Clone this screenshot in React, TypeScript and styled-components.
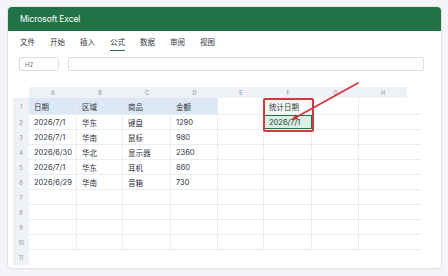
import React from "react";
import styled, { createGlobalStyle, css } from "styled-components";

const GlobalStyle = createGlobalStyle`
  html, body {
    margin: 0;
    padding: 0;
    background: #f3f5f8;
    font-family: Inter, "Noto Sans CJK SC", "Noto Sans", sans-serif;
  }
`;

const Page = styled.div`
  width: 448px;
  height: 276px;
  padding: 7px 7px 0 8px;
  box-sizing: border-box;
`;

const Card = styled.div`
  width: 433px;
  height: 261px;
  background: #ffffff;
  border-radius: 4px;
  box-shadow: 0 0 0 1px #e1e5ea, 0 1px 3px rgba(20, 30, 50, 0.06);
  overflow: hidden;
  display: flex;
  flex-direction: column;
`;

const TitleBar = styled.div`
  height: 24px;
  background: #217346;
  color: #ffffff;
  font-size: 8.5px;
  display: flex;
  align-items: center;
  padding-left: 12px;
  letter-spacing: -0.1px;
`;

const Menu = styled.div`
  display: flex;
  gap: 15px;
  padding: 7px 12px 0;
`;

const MenuItem = styled.div<{ $active?: boolean }>`
  font-size: 7.5px;
  line-height: 10px;
  color: #333a44;
  padding-bottom: 2px;
  border-bottom: 1.5px solid transparent;
  ${(p) =>
    p.$active &&
    css`
      border-bottom-color: #217346;
    `}
`;

const FormulaBar = styled.div`
  display: flex;
  gap: 9px;
  padding: 6px 17px 0 11px;
`;

const NameBox = styled.div`
  width: 40px;
  height: 14px;
  box-sizing: border-box;
  border: 1px solid #d9dee4;
  border-radius: 2px;
  font-size: 6px;
  color: #6b7380;
  padding-left: 5px;
  display: flex;
  align-items: center;
`;

const FormulaInput = styled.div`
  flex: 1;
  height: 14px;
  box-sizing: border-box;
  border: 1px solid #d9dee4;
  border-radius: 2px;
`;

const Grid = styled.div`
  position: relative;
  margin: 16px 0 0 5px;
  width: 408px;
`;

const HeaderRow = styled.div`
  display: flex;
  height: 11px;
`;

const Corner = styled.div`
  width: 16px;
`;

const ColHead = styled.div<{ $w: number }>`
  width: ${(p) => p.$w}px;
  background: #eef1f5;
  font-size: 5.5px;
  color: #8a93a0;
  display: flex;
  align-items: center;
  justify-content: center;
`;

const Row = styled.div<{ $h: number }>`
  display: flex;
  height: ${(p) => p.$h}px;
`;

const RowNum = styled.div`
  width: 16px;
  flex-shrink: 0;
  background: #eef2f7;
  font-size: 5.5px;
  color: #8a93a0;
  display: flex;
  align-items: center;
  justify-content: center;
`;

const Cells = styled.div<{ $lined: boolean }>`
  display: flex;
  width: 392px;
  box-sizing: border-box;
  border-bottom: 1px solid ${(p) => (p.$lined ? "#e9ecf0" : "transparent")};
`;

const Cell = styled.div<{ $w: number; $head?: boolean; $last?: boolean; $lined: boolean }>`
  width: ${(p) => p.$w}px;
  box-sizing: border-box;
  border-right: 1px solid ${(p) => (p.$lined && !p.$last ? "#e9ecf0" : "transparent")};
  padding-left: 5px;
  font-size: 7.5px;
  color: #2f3540;
  display: flex;
  align-items: center;
  white-space: nowrap;
  ${(p) =>
    p.$head &&
    css`
      background: #dde8f6;
    `}
`;

const SumHead = styled(Cell)`
  background: #f4faf6;
`;

const Picked = styled(Cell)`
  background: #d8f1e2;
  border: 1px solid #217346;
  padding-left: 4px;
`;

const RedFrame = styled.div`
  position: absolute;
  left: 250px;
  top: 11px;
  width: 51px;
  height: 34px;
  box-sizing: border-box;
  border: 2px solid #d2393c;
  border-radius: 2px;
  pointer-events: none;
`;

const Arrow = styled.svg`
  position: absolute;
  left: 0;
  top: -10px;
  overflow: visible;
`;

const widths = [48, 46, 48, 47, 46, 48, 47, 48];
const letters = ["A", "B", "C", "D", "E", "F", "G", "H"];

const data: string[][] = [
  ["日期", "区域", "商品", "金额", "", "统计日期", "", ""],
  ["2026/7/1", "华东", "键盘", "1290", "", "2026/7/1", "", ""],
  ["2026/7/1", "华南", "鼠标", "980", "", "", "", ""],
  ["2026/6/30", "华北", "显示器", "2360", "", "", "", ""],
  ["2026/7/1", "华东", "耳机", "860", "", "", "", ""],
  ["2026/6/29", "华南", "音箱", "730", "", "", "", ""],
];

const menus = ["文件", "开始", "插入", "公式", "数据", "审阅", "视图"];

export default function App() {
  const rows = Array.from({ length: 11 }, (_, i) => i);
  return (
    <>
      <GlobalStyle />
      <Page>
        <Card>
          <TitleBar>Microsoft Excel</TitleBar>
          <Menu>
            {menus.map((m) => (
              <MenuItem key={m} $active={m === "公式"}>
                {m}
              </MenuItem>
            ))}
          </Menu>
          <FormulaBar>
            <NameBox>H2</NameBox>
            <FormulaInput />
          </FormulaBar>
          <Grid>
            <HeaderRow>
              <Corner />
              {letters.map((l, i) => (
                <ColHead key={l} $w={widths[i]}>
                  {l}
                </ColHead>
              ))}
            </HeaderRow>
            {rows.map((r) => {
              const lined = r < 10;
              const vals = data[r] || [];
              return (
                <Row key={r} $h={r === 0 ? 17 : 15}>
                  <RowNum>{r + 1}</RowNum>
                  <Cells $lined={lined}>
                    {widths.map((w, c) => {
                      const v = vals[c] || "";
                      const last = c === widths.length - 1;
                      if (r === 0 && c === 5)
                        return (
                          <SumHead key={c} $w={w} $lined={lined}>
                            {v}
                          </SumHead>
                        );
                      if (r === 1 && c === 5)
                        return (
                          <Picked key={c} $w={w} $lined={lined}>
                            {v}
                          </Picked>
                        );
                      return (
                        <Cell key={c} $w={w} $lined={lined} $last={last} $head={r === 0 && c < 4}>
                          {v}
                        </Cell>
                      );
                    })}
                  </Cells>
                </Row>
              );
            })}
            <RedFrame />
            <Arrow width="408" height="60" viewBox="0 0 408 60">
              <defs>
                <marker id="head" markerWidth="6" markerHeight="6" refX="4.5" refY="3" orient="auto" markerUnits="userSpaceOnUse">
                  <path d="M0,0 L6,3 L0,6 Z" fill="#d2393c" />
                </marker>
              </defs>
              <line x1="345" y1="6" x2="280" y2="42" stroke="#d2393c" strokeWidth="1.8" strokeLinecap="round" markerEnd="url(#head)" />
            </Arrow>
          </Grid>
        </Card>
      </Page>
    </>
  );
}
